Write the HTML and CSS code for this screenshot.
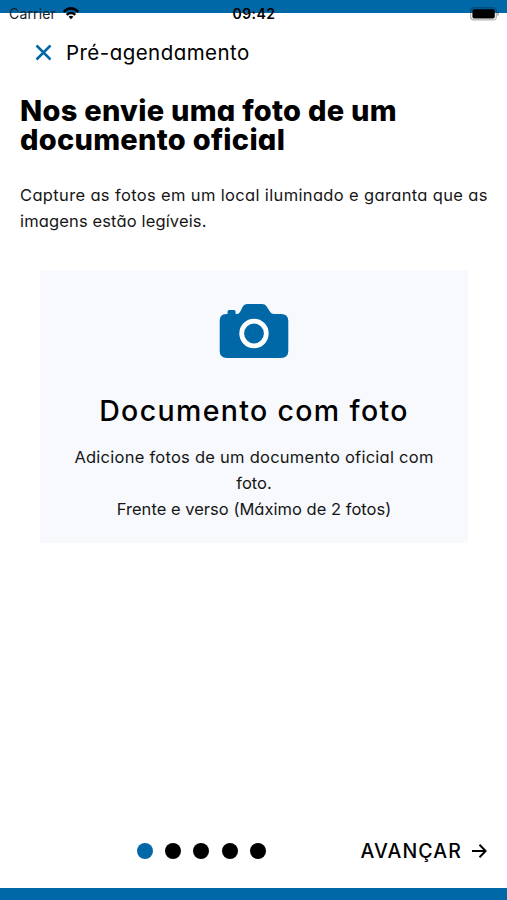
FILE: index.html
```html
<!DOCTYPE html>
<html lang="pt-BR">
<head>
<meta charset="utf-8">
<title>Pré-agendamento</title>
<link rel="stylesheet" href="styles.css">
</head>
<body>
<div class="screen">
  <div class="status">
    <div class="carrier"><span>Carrier</span>
      <svg class="wifi" width="18" height="14" viewBox="0 0 18 14"><path d="M.8 4.9Q9-2.9 17.2 4.9L15.4 6.7Q9 .9 2.6 6.7ZM3.8 7.9Q9 3.4 14.2 7.9L12.4 9.7Q9 6.9 5.6 9.7ZM6.6 10.8Q9 8.9 11.4 10.8L9 13.3Z"/></svg>
    </div>
    <span class="time">09:42</span>
    <svg class="battery" width="29" height="14" viewBox="0 0 29 14"><rect x=".7" y=".9" width="25.6" height="12" rx="3.2" fill="none" stroke="#000" stroke-opacity=".3" stroke-width="1.2"/><rect x="2.4" y="2.3" width="22.4" height="9.2" rx="1.8"/><path d="M27.4 5v4q1.5-.7 1.5-2t-1.5-2Z" opacity=".4"/></svg>
  </div>
  <header class="header">
    <svg class="close" width="17" height="17" viewBox="0 0 17 17"><path d="M1.5 1.5l14 14M15.5 1.5l-14 14"/></svg>
    <span class="header-title">Pré-agendamento</span>
  </header>
  <main class="main">
    <h1>Nos envie uma foto de um<br>documento oficial</h1>
    <p class="intro"><span class="intro-a">Capture as fotos em um local iluminado e garanta que as</span><br><span class="intro-b">imagens estão legíveis.</span></p>
    <section class="card">
      <svg class="camera" width="70" height="56" viewBox="0 0 70 56"><path fill="#0068a7" d="M7 11H8.5V8.8Q8.5 7 10.3 7H14.8Q16.6 7 16.6 8.8V11H18Q20 11 21 9L24 3.2Q25.5 1 28.5 1H43Q46 1 47.5 3.2L51.2 9Q52.3 11 55 11H62Q69.3 11 69.3 18V48Q69.3 55 62 55H8Q.7 55 .7 48V18Q.7 11 7 11Z"/><circle cx="35" cy="30.5" r="12.3" fill="none" stroke="#fff" stroke-width="4.8"/></svg>
      <h2>Documento com foto</h2>
      <p class="card-text"><span class="ct-a">Adicione fotos de um documento oficial com</span><br>foto.<br><span class="ct-c">Frente e verso (Máximo de 2 fotos)</span></p>
    </section>
  </main>
  <footer class="footer">
    <div class="dots"><i class="dot active"></i><i class="dot"></i><i class="dot"></i><i class="dot"></i><i class="dot"></i></div>
    <div class="next"><span>AVANÇAR</span><svg class="arrow" width="16" height="16" viewBox="0 0 16 16"><path d="M1 8h13.5M8.5 1.8 14.7 8l-6.2 6.2"/></svg></div>
  </footer>
</div>
</body>
</html>
```
FILE: styles.css
```css
* { box-sizing: border-box; margin: 0; padding: 0; }
body {
  background: #fff;
  color: #000;
  font-family: Inter, "Liberation Sans", sans-serif;
  font-feature-settings: "cv11";
}
.screen {
  height: 900px;
  border-bottom: 12px solid #0068a7;
  display: flex;
  flex-direction: column;
}
.status {
  height: 28px;
  padding: 0 8px 0 9px;
  background: linear-gradient(#0068a7 13px, #fff 13px);
  display: grid;
  grid-template-columns: 1fr auto 1fr;
  align-items: center;
  font-size: 14px;
  line-height: 28px;
  font-feature-settings: normal;
}
.carrier { display: flex; align-items: center; gap: 6px; color: #14222b; }
.carrier span { letter-spacing: 0.15px; }
.wifi { margin-top: -2px; }
.time { font-weight: 600; letter-spacing: 0.45px; }
.battery { justify-self: end; margin-top: -1px; }
.header {
  height: 48px;
  padding-left: 35px;
  display: flex;
  align-items: center;
  gap: 14px;
}
.close { fill: none; stroke: #0068a7; stroke-width: 2.5; }
.header-title { font-size: 20.5px; letter-spacing: 0.45px; }
.main { flex: 1; padding: 20px 20px 0; white-space: nowrap; }
h1 { font-size: 29px; line-height: 29px; font-weight: 800; letter-spacing: 0.27px; }
.intro { margin-top: 29px; font-size: 16.5px; line-height: 25.8px; color: #161616; }
.intro-a { letter-spacing: 0.35px; }
.intro-b { letter-spacing: 0.14px; }
.card {
  width: 428px;
  height: 273px;
  margin: 35.4px 0 0 20px;
  padding-top: 33px;
  background: #f7f9fd;
  text-align: center;
}
.camera { display: block; margin: 0 auto; }
h2 { margin-top: 31px; font-size: 28.5px; line-height: 42px; font-weight: 480; letter-spacing: 1.35px; }
.card-text { margin-top: 13px; font-size: 16.5px; line-height: 25.8px; color: #161616; }
.ct-a { letter-spacing: 0.25px; }
.ct-c { letter-spacing: 0.02px; }
.footer {
  height: 74px;
  padding: 0 20px 0 137px;
  display: flex;
  align-items: center;
  justify-content: space-between;
}
.dots { display: flex; gap: 12.2px; }
.dot { width: 16px; height: 16px; border-radius: 50%; background: #000; }
.dot.active { background: #0068a7; }
.next { display: flex; align-items: center; gap: 9px; font-size: 19.5px; font-weight: 550; letter-spacing: 1.1px; }
.arrow { fill: none; stroke: #000; stroke-width: 2; }
```
